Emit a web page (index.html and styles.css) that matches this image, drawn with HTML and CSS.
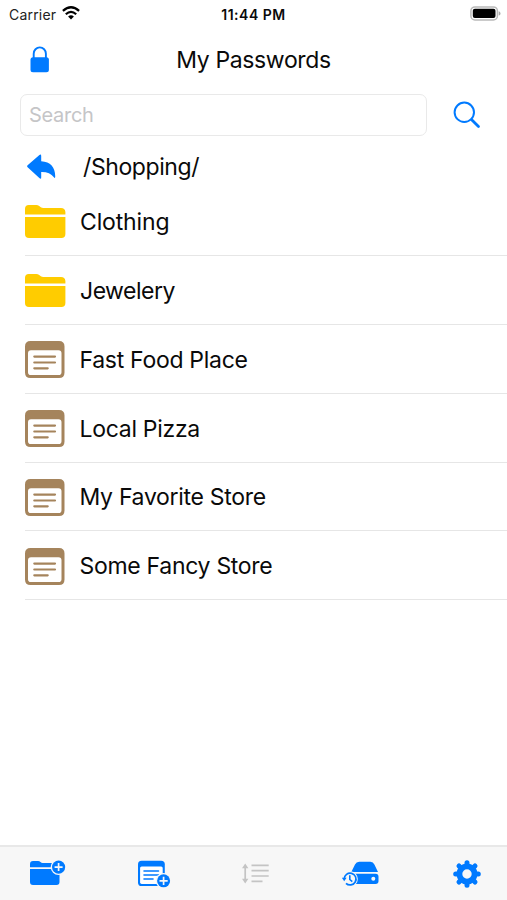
FILE: index.html
```html
<!DOCTYPE html>
<html lang="en">
<head>
<meta charset="utf-8">
<title>My Passwords</title>
<link rel="stylesheet" href="styles.css">
</head>
<body>
<svg width="0" height="0" class="defs">
  <symbol id="folder" viewBox="0 0 42 34">
    <path d="M1 10.600V4.800Q1 1 4.800 1h7.400q1.800 0 3 1l1.600 1.300q1 .8 2.600.8h17.600q4 0 4.400 3.900v2.600z"/>
    <path d="M1 13h40.400v17q0 4-4 4H5q-4 0-4-4z"/>
  </symbol>
  <symbol id="note" viewBox="0 0 40 37">
    <path fill-rule="evenodd" d="M5.500 0h28.500q5.500 0 5.500 5.500v26q0 5.500-5.500 5.500H5.500Q0 37 0 31.500v-26Q0 0 5.500 0zM6 9.200q-3 0-3 3v19q0 2.800 2.800 2.800h27.900q2.800 0 2.800-2.800v-19q0-3-3-3z"/>
    <path d="M9.300 15.600h20.700M9.300 21.500h20.700M9.300 27.300h13.400" fill="none" stroke="currentColor" stroke-width="2.200" stroke-linecap="round"/>
  </symbol>
</svg>
<div class="app">
  <div class="status">
    <div class="carrier"><span>Carrier</span>
      <svg width="18" height="14" viewBox="0 0 18 14"><path d="M.9 4.900Q9-2.400 17.100 4.900M3.800 8.200Q9 3.500 14.200 8.200" fill="none" stroke="#000" stroke-width="2.200"/><path d="M9 13.500 6.100 10.600Q9 8 11.900 10.600z" fill="#000"/></svg>
    </div>
    <div class="time">11:44 PM</div>
    <svg class="battery" width="31" height="15" viewBox="0 0 31 15"><rect x=".9" y=".9" width="26.500" height="13" rx="4" fill="#fff" stroke="#b9b9b9" stroke-width="1.500"/><rect x="2.800" y="2.700" width="22.700" height="9.400" rx="2"/><path d="M28.700 5.200q1.800.5 1.800 2.200t-1.800 2.200z" fill="#aaa"/></svg>
  </div>
  <header class="title-bar">
    <svg class="lock" width="20" height="27" viewBox="0 0 20 27"><path d="M3.700 13V7.700a6.100 6.300 0 0 1 12.200 0V13" fill="none" stroke="currentColor" stroke-width="1.900"/><rect x=".5" y="11.300" width="18.400" height="15" rx="2.500"/></svg>
    <h1>My Passwords</h1>
  </header>
  <div class="search-row">
    <input class="search" type="text" placeholder="Search" aria-label="Search">
    <svg width="28" height="28" viewBox="0 0 28 28"><circle cx="11.300" cy="11.300" r="9.700" fill="none" stroke="currentColor" stroke-width="2"/><path d="m18.700 18.700 6.800 6.800" stroke="currentColor" stroke-width="2.800" stroke-linecap="round"/></svg>
  </div>
  <div class="path-row">
    <svg width="29" height="26" viewBox="0 0 29 26"><path d="M.6 11.200 12.400 1q1.800-1.200 1.800 1v5.200C23.500 7.600 28.200 13.500 28.200 22v1q-.3 1.700-1.300.2-4.300-5.500-12.700-5.200v5.400q0 2-1.600.8L.6 13.200q-1-1 0-2z"/></svg>
    <span class="crumb">/Shopping/</span>
  </div>
  <ul class="list">
    <li><svg class="ico-folder"><use href="#folder"/></svg><span class="wide">Clothing</span></li>
    <li><svg class="ico-folder"><use href="#folder"/></svg><span class="tight">Jewelery</span></li>
    <li><svg class="ico-note"><use href="#note"/></svg><span>Fast Food Place</span></li>
    <li><svg class="ico-note"><use href="#note"/></svg><span>Local Pizza</span></li>
    <li><svg class="ico-note"><use href="#note"/></svg><span>My Favorite Store</span></li>
    <li><svg class="ico-note"><use href="#note"/></svg><span>Some Fancy Store</span></li>
  </ul>
  <nav class="toolbar">
    <svg width="36" height="27" viewBox="0 0 36 27"><path d="M0 7.300V4Q0 1 3 1h5q1.500 0 2.500 1t2 1H27v4.300zM0 8.900h29.500V22q0 3-3 3H3q-3 0-3-3z"/><circle cx="28.600" cy="7.100" r="7.900" fill="#f7f7f7"/><circle cx="28.600" cy="7.100" r="6.600"/><path d="M24.600 7.100h8M28.600 3.100v8" stroke="#f7f7f7" stroke-width="1.700"/></svg>
    <svg width="33" height="28" viewBox="0 0 33 28"><rect y=".8" width="26.800" height="25.200" rx="3.600"/><rect x="2.100" y="6.400" width="22.600" height="17.500" rx="1.600" fill="#fff"/><path d="M6 11h14.500M6 15h14.500M6 19h9" fill="none" stroke="currentColor" stroke-width="1.600" stroke-linecap="round"/><circle cx="25.600" cy="20.800" r="7.800" fill="#f7f7f7"/><circle cx="25.600" cy="20.800" r="6.500"/><path d="M21.500 20.800h8.200M25.600 16.700v8.200" stroke="#f7f7f7" stroke-width="1.700"/></svg>
    <svg class="muted" width="28" height="21" viewBox="0 0 28 21"><path d="M3.200 3v15M9.500 2.300h17.200M9.500 7.700h17.200M9.500 13h17.200M9.500 18.300h11" fill="none" stroke="currentColor" stroke-width="1.700"/><path d="M0 5.300 3.200.5l3.200 4.800zM0 15.700l3.200 4.800 3.200-4.800z"/></svg>
    <svg width="37" height="26" viewBox="0 0 37 26"><path d="M9.300 11 13 3.400Q14.300.8 17.200.8h11.200q2.800 0 4 2.600L36 11z"/><path d="M9 12.700h24.500q3 0 3 3V20q0 3-3 3H12z"/><circle cx="31.300" cy="17.800" r="2" fill="#f7f7f7"/><circle cx="8" cy="18" r="7.800" fill="#f7f7f7"/><path d="M2.200 18a5.900 5.900 0 1 1 1.800 4.300" fill="none" stroke="currentColor" stroke-width="1.700"/><path d="M-.1 16.800h4.700L2.200 20.300z"/><path d="M7.800 14.300v4.200l2.500 2.200" fill="none" stroke="currentColor" stroke-width="1.600"/></svg>
    <svg width="28" height="28" viewBox="-14 -14 28 28"><circle r="7.600" fill="none" stroke="currentColor" stroke-width="5.800"/><path d="M0-11.300V-8M0 11.300V8M-11.300 0H-8M11.300 0H8M-8-8l2 2M8 8 6 6M8-8 6-6M-8 8l2-2" stroke="currentColor" stroke-width="5" stroke-linecap="round"/></svg>
  </nav>
</div>
</body>
</html>
```
FILE: styles.css
```css
* { box-sizing: border-box; }
body {
  margin: 0;
  background: #fff;
  color: #0a0a0a;
  font-family: Inter, "Liberation Sans", sans-serif;
}
svg { display: block; fill: currentColor; flex: none; }
.defs { position: absolute; }
.app { width: 507px; height: 900px; display: flex; flex-direction: column; overflow: hidden; }
.status {
  height: 28px;
  display: grid;
  grid-template-columns: 1fr auto 1fr;
  align-items: center;
  padding: 0 6px 0 6px;
  font-size: 14px;
}
.carrier { display: flex; align-items: center; gap: 6px; padding-left: 3px; color: #222; letter-spacing: 0.2px; }
.carrier svg { margin-top: -2px; }
.time { font-weight: 600; font-size: 14px; letter-spacing: 0.5px; }
.battery { justify-self: end; margin-top: -2px; fill: #000; }
.title-bar {
  height: 62px;
  display: grid;
  grid-template-columns: 1fr auto 1fr;
  align-items: center;
  padding: 1px 0 0 30px;
}
.title-bar h1 { margin: 0 30px 0 0; font-size: 23px; font-weight: 400; letter-spacing: -0.35px; }
.lock, .search-row svg, .path-row svg { color: #007aff; }
.search-row { display: flex; align-items: center; height: 50px; padding-left: 20px; gap: 26px; }
.search {
  width: 407px;
  height: 42px;
  border: 1px solid #e9e9e9;
  border-radius: 7px;
  padding: 0 8px;
  font: 400 20px Inter, sans-serif;
  letter-spacing: -0.3px;
  background: #fff;
  outline: 0;
}
.search::placeholder { color: #c5c5c7; opacity: 1; }
.path-row { display: flex; align-items: center; height: 47.400px; padding: 6px 0 0 27px; gap: 27px; font-size: 23px; }
.crumb { letter-spacing: -0.4px; }
.list { list-style: none; margin: 0; padding: 0 0 0 25px; font-size: 23px; letter-spacing: -0.3px; }
.list li { height: 68.800px; display: flex; align-items: center; gap: 14.500px; border-bottom: 1px solid #e6e6e6; padding-top: 2px; }
.ico-folder { width: 42px; height: 34px; margin: -2px -0.500px 0 -1px; color: #fc0; }
.ico-note { width: 40px; height: 37px; color: #a5845c; }
.wide { letter-spacing: -0.15px; }
.tight { letter-spacing: -0.5px; }
.toolbar {
  height: 55px;
  margin-top: auto;
  display: grid;
  grid-template-columns: 108px 104px 100px 111px auto;
  align-items: center;
  padding-left: 29.500px;
  background: #f7f7f7;
  border-top: 2px solid #e8e8e8;
  color: #007aff;
}
.toolbar .muted { color: #c4c4c4; }
```
